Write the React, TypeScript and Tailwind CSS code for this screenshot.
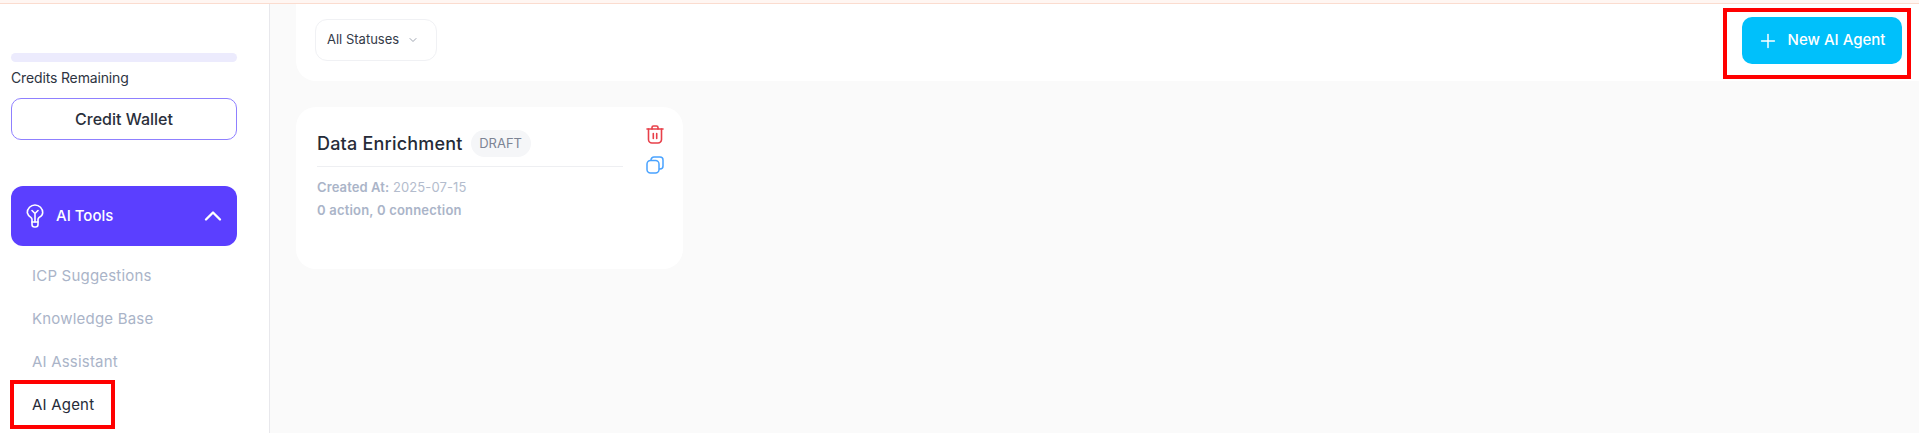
import { ChevronDown, ChevronUp, Plus } from "lucide-react";

const subItems = ["ICP Suggestions", "Knowledge Base", "AI Assistant"];

function BulbIcon() {
  return (
    <svg width="18" height="24" viewBox="0 0 18 24" fill="none" stroke="currentColor" strokeWidth="1.6" strokeLinecap="round" strokeLinejoin="round">
      <path d="M6 18v-2.600c0-.8-.5-1.400-1.200-2A7.600 7.600 0 0 1 1.300 8.800 7.700 7.700 0 0 1 9 1a7.700 7.700 0 0 1 7.700 7.800c0 1.900-1.300 3.500-3.500 4.600-.7.600-1.200 1.200-1.200 2V18z" />
      <path d="M6 18v2.500A2.500 2.500 0 0 0 8.500 23h1a2.500 2.500 0 0 0 2.500-2.500V18" />
      <path d="M6 6.500l3 3 3-3M9 9.500V18" />
    </svg>
  );
}

function TrashIcon() {
  return (
    <svg width="18" height="19" viewBox="0 0 18 19" fill="none" stroke="#e8404a" strokeWidth="1.6" strokeLinecap="round" strokeLinejoin="round">
      <path d="M1 4h16" />
      <path d="M6 4V2.500A1.500 1.500 0 0 1 7.500 1h3A1.500 1.500 0 0 1 12 2.500V4" />
      <path d="M2.500 4v10.500A3.500 3.500 0 0 0 6 18h6a3.500 3.500 0 0 0 3.500-3.500V4" />
      <path d="M7.300 8.500v5M10.700 8.500v5" />
    </svg>
  );
}

function CopyIcon() {
  return (
    <svg width="18" height="18" viewBox="0 0 18 18" fill="none" stroke="#4aa3ff" strokeWidth="1.5">
      <rect x="1" y="4.500" width="12" height="12.500" rx="3.500" />
      <path d="M5 4.500V4a3 3 0 0 1 3-3h6a3 3 0 0 1 3 3v6a3 3 0 0 1-3 3h-1" />
    </svg>
  );
}

function Sidebar() {
  return (
    <aside className="relative w-[270px] shrink-0 border-r border-[#e8e8ec] bg-white px-[11px] pt-[49px]">
      <div className="h-[9px] w-[226px] rounded-full bg-[#ecebfd]" />
      <p className="mt-[6px] text-[14px] leading-[20px] tracking-[-0.15px] text-[#2e3442]">Credits Remaining</p>
      <button className="mt-[10px] h-[42px] w-[226px] rounded-[10px] border border-[#8f80ff] text-[16px] font-medium text-[#2a2f3b]">
        Credit Wallet
      </button>
      <div className="mt-[46px] flex h-[60px] w-[226px] items-center rounded-[12px] bg-[#5b3fff] pl-[15px] pr-[10px] text-white">
        <BulbIcon />
        <span className="ml-[12px] flex-1 text-[15px] font-medium">AI Tools</span>
        <ChevronUp size={28} strokeWidth={2} />
      </div>
      <nav className="mt-[9px] flex flex-col pl-[21px] text-[15px] tracking-[0.2px]">
        {subItems.map((item) => (
          <a key={item} className="flex h-[43px] items-center text-[#aab4c8]">
            {item}
          </a>
        ))}
        <a className="flex h-[43px] items-center text-[#262b38]">AI Agent</a>
      </nav>
      <div className="absolute left-[10px] top-[376px] h-[49px] w-[105px] border-[4px] border-[#ff0000]" />
    </aside>
  );
}

function AgentCard() {
  return (
    <div className="ml-[26px] mt-[26px] flex h-[162px] w-[387px] rounded-[20px] bg-white pl-[21px] pr-[20px]">
      <div className="w-[306px] shrink-0">
        <div className="flex h-[60px] items-end border-b border-[#eeeff2] pb-[9px]">
          <h3 className="text-[18px] font-medium leading-[27px] tracking-[0.2px] text-[#262b38]">Data Enrichment</h3>
          <span className="ml-[8px] flex h-[27px] w-[60px] items-center justify-center rounded-full bg-[#f5f6f8] text-[13px] text-[#7d8494]">
            DRAFT
          </span>
        </div>
        <p className="mt-[10px] text-[13px] leading-[20px] tracking-[0.1px] text-[#b3bccd]">
          <span className="font-semibold text-[#aab4c8]">Created At:</span> 2025-07-15
        </p>
        <p className="mt-[3px] text-[13px] font-semibold leading-[20px] tracking-[0.2px] text-[#aab4c8]">0 action, 0 connection</p>
      </div>
      <div className="ml-[23px] flex flex-col items-center gap-[12px] pt-[18px]">
        <TrashIcon />
        <CopyIcon />
      </div>
    </div>
  );
}

function Toolbar() {
  return (
    <div className="relative ml-[26px] flex h-[77px] items-start justify-between rounded-bl-[20px] bg-white pl-[19px] pr-[17px] pt-[15px]">
      <button className="flex h-[42px] w-[122px] items-center rounded-[12px] border border-[#f0f1f4] pl-[11px] text-[13px] text-[#343a48]">
        All Statuses
        <ChevronDown size={12} className="ml-[8px] text-[#a0a6b2]" />
      </button>
      <button className="-mt-[2px] flex h-[47px] w-[160px] items-center justify-center gap-[9px] rounded-[10px] bg-[#00c0fb] pr-[2px] text-[15px] font-medium text-white">
        <Plus size={22} strokeWidth={1.6} />
        New AI Agent
      </button>
      <div className="absolute right-[8px] top-[4px] h-[71px] w-[188px] border-[4px] border-[#ff0000]" />
    </div>
  );
}

export default function App() {
  return (
    <div className="flex h-[433px] flex-col overflow-hidden bg-white font-['Inter','Noto_Sans',sans-serif]">
      <div className="h-1 shrink-0 border-b border-[#fbdccf] bg-[#fff6f2]" />
      <div className="flex min-h-0 flex-1">
        <Sidebar />
        <main className="min-w-0 flex-1 bg-[#fafafa]">
          <Toolbar />
          <AgentCard />
        </main>
      </div>
    </div>
  );
}
